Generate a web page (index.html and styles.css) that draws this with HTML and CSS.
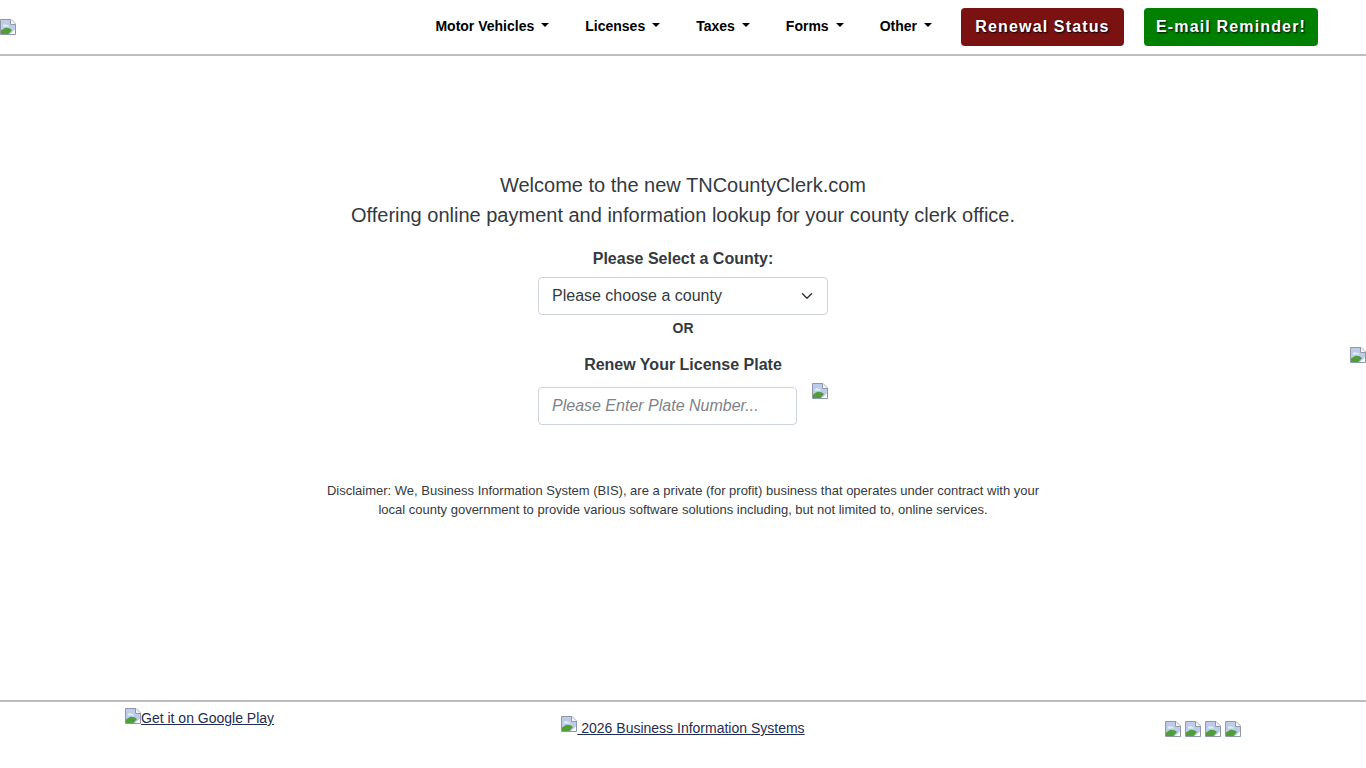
FILE: index.html
```html
<!DOCTYPE html>
<html lang="en">
<head>
  <meta charset="UTF-8" />
  <meta name="viewport" content="width=device-width, initial-scale=1.0"/>
  <title>TN County Clerk</title>
  <link rel="stylesheet" href="styles.css">
</head>
<body>
  <svg class="defs" width="0" height="0">
    <symbol id="broken" viewBox="0 0 16 16">
      <path d="M.5.5H11L15.5 5v10.5H.5z" fill="#fff" stroke="#8f98a6"/>
      <path d="M1 1h9.5v4.5H15V11l-3 4H1z" fill="#bccce9"/>
      <path d="M3 6c1.5-1 3-1 4 0 1 0 2 .5 2 1.5H3z" fill="#e6edf9"/>
      <path d="M10.5.5V5.5h5" fill="#f4f6fa" stroke="#8f98a6"/>
      <path d="M1 15v-3.5l4-2.5c2.5-.5 5 .5 7 2l-3.5 4z" fill="#4f9e3a"/>
      <path d="M10 15l5-4.5V15z" fill="#fff"/>
    </symbol>
  </svg>

  <nav class="navbar">
    <a class="logo" href="#"><svg class="broken"><use href="#broken"/></svg></a>
    <div class="nav-right">
      <a class="nav-link" href="#">Motor Vehicles</a>
      <a class="nav-link" href="#">Licenses</a>
      <a class="nav-link" href="#">Taxes</a>
      <a class="nav-link" href="#">Forms</a>
      <a class="nav-link" href="#">Other</a>
      <a class="nav-btn btn-red" href="#">Renewal Status</a>
      <a class="nav-btn btn-green" href="#">E-mail Reminder!</a>
    </div>
  </nav>

  <svg class="broken side-img"><use href="#broken"/></svg>

  <main class="content">
    <p class="welcome">Welcome to the new TNCountyClerk.com<br>Offering online payment and information lookup for your county clerk office.</p>
    <label class="field-label" for="county">Please Select a County:</label>
    <select class="county-select" id="county">
      <option>Please choose a county</option>
    </select>
    <div class="or">OR</div>
    <label class="field-label renew-label" for="plate">Renew Your License Plate</label>
    <div class="plate-row">
      <input class="plate-input" type="text" id="plate" placeholder="Please Enter Plate Number..." />
      <svg class="broken plate-img"><use href="#broken"/></svg>
    </div>
    <p class="disclaimer">Disclaimer: We, Business Information System (BIS), are a private (for profit) business that operates under contract with your<br>local county government to provide various software solutions including, but not limited to, online services.</p>
  </main>

  <footer class="footer">
    <a class="foot-link foot-left" href="#"><svg class="broken"><use href="#broken"/></svg>Get it on Google Play</a>
    <a class="foot-link foot-center" href="#"><svg class="broken"><use href="#broken"/></svg> 2026 Business Information Systems</a>
    <div class="foot-social">
      <svg class="broken"><use href="#broken"/></svg>
      <svg class="broken"><use href="#broken"/></svg>
      <svg class="broken"><use href="#broken"/></svg>
      <svg class="broken"><use href="#broken"/></svg>
    </div>
  </footer>
</body>
</html>
```

FILE: styles.css
```css
* {
  box-sizing: border-box;
}

body {
  margin: 0;
  height: 768px;
  overflow: hidden;
  font-family: "Liberation Sans", Arial, sans-serif;
  color: #343a40;
  background: #fff;
  display: flex;
  flex-direction: column;
}

.defs {
  position: absolute;
}

.broken {
  width: 16px;
  height: 16px;
  display: inline-block;
  flex: none;
}

.navbar {
  height: 56px;
  border-bottom: 2px solid #bdbdbd;
  display: flex;
  justify-content: space-between;
  align-items: center;
  padding-right: 48px;
}

.logo {
  display: flex;
}

.nav-right {
  display: flex;
  align-items: center;
}

.nav-link {
  color: #000;
  font-size: 14px;
  font-weight: bold;
  text-decoration: none;
  margin-right: 36px;
  display: flex;
  align-items: center;
  margin-top: -3px;
}

.nav-link::after {
  content: "";
  margin-left: 7px;
  border-top: 4px solid #000;
  border-left: 4px solid transparent;
  border-right: 4px solid transparent;
  margin-top: -2px;
}

.nav-link:nth-child(5) {
  margin-right: 29px;
}

.nav-btn {
  height: 38px;
  line-height: 38px;
  text-align: center;
  border-radius: 4px;
  color: #fff;
  font-size: 16px;
  font-weight: bold;
  letter-spacing: 1.15px;
  text-decoration: none;
  text-shadow: 1px 1px 2px #000;
}

.btn-red {
  width: 163px;
  background: #7a1212;
  margin-right: 20px;
}

.btn-green {
  width: 174px;
  background: #008000;
}

.side-img {
  position: absolute;
  top: 347px;
  left: 1350px;
}

.content {
  flex: 1;
  display: flex;
  flex-direction: column;
  align-items: center;
  padding-top: 114px;
}

.welcome {
  margin: 0;
  font-size: 20px;
  line-height: 30px;
  text-align: center;
}

.field-label {
  font-size: 16px;
  font-weight: bold;
  line-height: 24px;
  margin-top: 17px;
  margin-bottom: 6px;
}

.county-select {
  width: 290px;
  height: 38px;
  padding: 0 36px 2px 13px;
  font-family: inherit;
  font-size: 16px;
  color: #343a40;
  background: #fff url("data:image/svg+xml,%3csvg xmlns='http://www.w3.org/2000/svg' viewBox='0 0 16 16'%3e%3cpath fill='none' stroke='%23343a40' stroke-linecap='round' stroke-linejoin='round' stroke-width='2' d='m2 5 6 6 6-6'/%3e%3c/svg%3e") no-repeat right 14px center / 12px 12px;
  border: 1px solid #ced4da;
  border-radius: 4px;
  appearance: none;
}

.or {
  font-size: 14px;
  font-weight: bold;
  line-height: 20px;
  margin-top: 3px;
}

.renew-label {
  margin-top: 15px;
  margin-bottom: 10px;
}

.plate-row {
  width: 290px;
  display: flex;
  align-items: flex-start;
}

.plate-input {
  width: 259px;
  height: 38px;
  padding: 0 13px;
  font-family: inherit;
  font-size: 16px;
  color: #343a40;
  border: 1px solid #ced4da;
  border-radius: 4px;
}

.plate-input::placeholder {
  font-style: italic;
  color: #7d8389;
}

.plate-img {
  margin-left: 15px;
  margin-top: -4px;
}

.disclaimer {
  margin: 56px 0 0;
  font-size: 13px;
  line-height: 19px;
  text-align: center;
  color: #343a40;
}

.footer {
  height: 68px;
  border-top: 2px solid #bdbdbd;
  display: grid;
  grid-template-columns: 1fr auto 1fr;
  padding: 0 125px;
}

.foot-link {
  color: #1f2d50;
  font-size: 14px;
}

.foot-left {
  justify-self: start;
  padding-top: 6px;
}

.foot-left .broken {
  vertical-align: -1px;
}

.foot-center {
  padding-top: 14px;
}

.foot-center .broken {
  vertical-align: 1px;
}

.foot-social {
  justify-self: end;
  display: flex;
  gap: 4px;
  padding-top: 19px;
}
```
